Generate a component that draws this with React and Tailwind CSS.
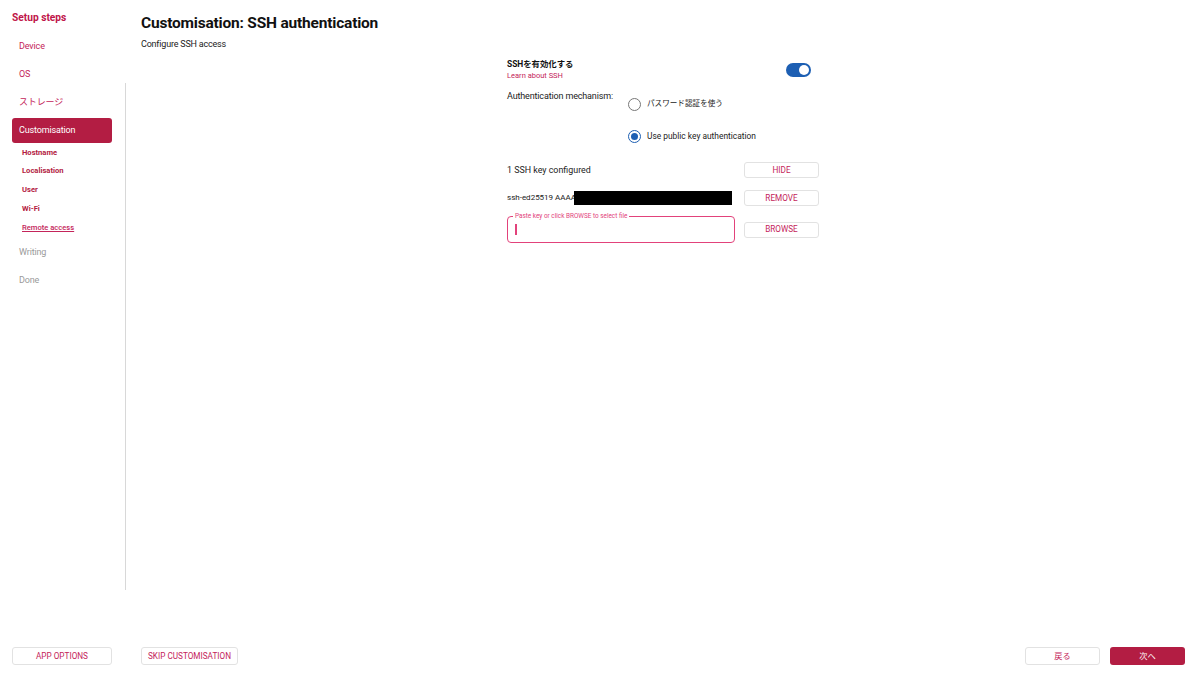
import React from "react";

const font = { fontFamily: "Roboto, 'Noto Sans CJK JP', sans-serif" };

function SideItem({ children, tone = "link" }) {
  const color = tone === "link" ? "text-[#c4245a]" : "text-[#9a9a9a]";
  return (
    <div className={`h-[25px] flex items-center pl-[7px] text-[9px] tracking-[-0.15px] ${color}`}>{children}</div>
  );
}

function SubItem({ children, underline }) {
  return (
    <div
      className={`h-[18.75px] flex items-center pl-[10px] text-[7.6px] ${
        underline ? "underline font-medium text-[#c4245a]" : "font-bold text-[#b31b42]"
      }`}
    >
      {children}
    </div>
  );
}

function OutlineBtn({ children, className = "" }) {
  return (
    <div
      className={`flex items-center justify-center border border-[#e2e2e2] rounded-[3px] bg-white text-[8.2px] text-[#c4245a] whitespace-nowrap ${className}`}
    >
      {children}
    </div>
  );
}

export default function App() {
  return (
    <div className="w-[1200px] h-[675px] flex flex-col bg-white overflow-hidden" style={font}>
      <div className="flex flex-1 min-h-0">
        {/* Sidebar */}
        <aside className="w-[125px] shrink-0 pl-[12px] pr-[13px]">
          <div className="pt-[12px] h-[34px] text-[10.2px] font-bold text-[#c0154a] leading-[12px]">Setup steps</div>
          <div className="flex flex-col gap-[3px]">
            <SideItem>Device</SideItem>
            <SideItem>OS</SideItem>
            <SideItem>ストレージ</SideItem>
            <div>
              <div className="h-[25px] flex items-center pl-[7px] text-[9px] tracking-[-0.15px] text-white bg-[#b31d43] rounded-[3px]">
                Customisation
              </div>
              <SubItem>Hostname</SubItem>
              <SubItem>Localisation</SubItem>
              <SubItem>User</SubItem>
              <SubItem>Wi-Fi</SubItem>
              <SubItem underline>Remote access</SubItem>
            </div>
            <SideItem tone="muted">Writing</SideItem>
            <SideItem tone="muted">Done</SideItem>
          </div>
        </aside>
        <div className="w-px bg-[#d8d8d8] mt-[83px] h-[507px] shrink-0" />

        {/* Main */}
        <main className="flex-1 pl-[15px] pr-[15px]">
          <h1 className="pt-[13px] text-[15.5px] tracking-[-0.2px] leading-[20px] font-bold text-[#111]">
            Customisation: SSH authentication
          </h1>
          <p className="mt-[5px] text-[9px] tracking-[-0.2px] leading-[12px] text-[#222]">Configure SSH access</p>

          <div className="w-[312px] mx-auto mt-[9px] text-[#222]">
            {/* SSH toggle */}
            <div className="flex items-start justify-between">
              <div>
                <div className="text-[8.4px] leading-[11px] font-bold text-[#111]">SSHを有効化する</div>
                <div className="text-[7.5px] leading-[11px] text-[#c4245a]">Learn about SSH</div>
              </div>
              <div className="mr-[8px] mt-[4px] w-[25px] h-[14px] rounded-full bg-[#1d5fb3] flex items-center justify-end pr-[2px]">
                <div className="w-[10px] h-[10px] rounded-full bg-white" />
              </div>
            </div>

            {/* Auth mechanism */}
            <div className="flex mt-[9px]">
              <div className="w-[121px] text-[9px] tracking-[-0.15px] leading-[12px] whitespace-nowrap">Authentication mechanism:</div>
              <div className="flex flex-col gap-[18px] pt-[7px]">
                <div className="flex items-center gap-[6px] h-[14px]">
                  <div className="w-[13px] h-[13px] rounded-full border-[1.5px] border-[#777]" />
                  <span className="text-[7.6px]">パスワード認証を使う</span>
                </div>
                <div className="flex items-center gap-[6px] h-[14px]">
                  <div className="w-[13px] h-[13px] rounded-full border-[1.5px] border-[#1d5fb3] flex items-center justify-center">
                    <div className="w-[7px] h-[7px] rounded-full bg-[#1d5fb3]" />
                  </div>
                  <span className="text-[8.4px]">Use public key authentication</span>
                </div>
              </div>
            </div>

            {/* Keys configured */}
            <div className="flex items-center justify-between mt-[19px]">
              <div className="text-[8.9px] translate-y-[1px]">1 SSH key configured</div>
              <OutlineBtn className="w-[75px] h-[16px]">HIDE</OutlineBtn>
            </div>

            <div className="flex items-center justify-between mt-[12px]">
              <div className="flex items-center whitespace-nowrap">
                <span className="text-[8px]">ssh-ed25519 AAAA</span>
                <div className="w-[158px] h-[14px] bg-black -ml-[2px]" />
              </div>
              <OutlineBtn className="w-[75px] h-[16px]">REMOVE</OutlineBtn>
            </div>

            {/* Input */}
            <div className="flex items-center justify-between mt-[10px]">
              <div className="relative w-[228px] h-[27px] border-[1.5px] border-[#e2427b] rounded-[4px] flex items-center pl-[7px]">
                <div className="absolute -top-[5px] left-[5px] bg-white px-[2px] text-[6.4px] leading-[8px] text-[#e2427b] whitespace-nowrap">
                  Paste key or click BROWSE to select file
                </div>
                <div className="w-[1.5px] h-[11px] bg-[#e2427b]" />
              </div>
              <OutlineBtn className="w-[75px] h-[16px]">BROWSE</OutlineBtn>
            </div>
          </div>
        </main>
      </div>

      {/* Footer */}
      <footer className="h-[38px] shrink-0 flex items-start pt-[10px] pl-[12px] pr-[15px]">
        <OutlineBtn className="w-[100px] h-[18px]">APP OPTIONS</OutlineBtn>
        <OutlineBtn className="w-[97px] h-[18px] ml-[29px]">SKIP CUSTOMISATION</OutlineBtn>
        <div className="flex-1" />
        <OutlineBtn className="w-[75px] h-[18px]">戻る</OutlineBtn>
        <div className="w-[75px] h-[18px] ml-[10px] flex items-center justify-center rounded-[3px] bg-[#b31d43] text-white text-[8.2px]">
          次へ
        </div>
      </footer>
    </div>
  );
}
